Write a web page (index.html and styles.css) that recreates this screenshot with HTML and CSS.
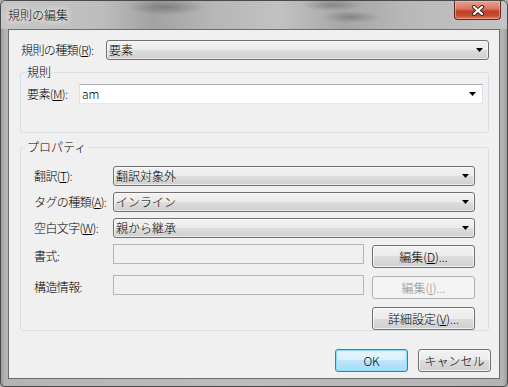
FILE: index.html
```html
<!DOCTYPE html>
<html lang="ja">
<head>
    <meta charset="UTF-8">
    <title>規則の編集</title>
    <link rel="stylesheet" href="styles.css">
</head>
<body>

<div class="window">
    <div class="titlebar">
        <span class="title">規則の編集</span>
        <div class="close">
            <svg width="14" height="11" viewBox="0 0 14 11">
                <path d="M3 2 L11 9 M11 2 L3 9" stroke="#3a2a28" stroke-width="4.2" stroke-linecap="round"/>
                <path d="M3 2 L11 9 M11 2 L3 9" stroke="#ffffff" stroke-width="2.2" stroke-linecap="round"/>
            </svg>
        </div>
    </div>

    <div class="client">
        <div class="row row-top">
            <label class="lbl lbl-kind">規則の種類(<u>R</u>):</label>
            <div class="combo combo-kind">
                <span class="value">要素</span>
                <svg class="arrow" width="7" height="4" viewBox="0 0 7 4"><polygon points="0,0 7,0 3.5,4" fill="#000"/></svg>
            </div>
        </div>

        <div class="group group-rule">
            <div class="group-title">規則</div>
            <div class="row row-elem">
                <label class="lbl lbl-elem">要素(<u>M</u>):</label>
                <div class="combo combo-edit">
                    <span class="value">am</span>
                    <svg class="arrow" width="7" height="4" viewBox="0 0 7 4"><polygon points="0,0 7,0 3.5,4" fill="#000"/></svg>
                </div>
            </div>
        </div>

        <div class="group group-prop">
            <div class="group-title">プロパティ</div>
            <div class="prop-rows">
                <div class="row">
                    <label class="lbl lbl-prop">翻訳(<u>T</u>):</label>
                    <div class="combo combo-prop">
                        <span class="value">翻訳対象外</span>
                        <svg class="arrow" width="7" height="4" viewBox="0 0 7 4"><polygon points="0,0 7,0 3.5,4" fill="#000"/></svg>
                    </div>
                </div>
                <div class="row">
                    <label class="lbl lbl-prop">タグの種類(<u>A</u>):</label>
                    <div class="combo combo-prop">
                        <span class="value">インライン</span>
                        <svg class="arrow" width="7" height="4" viewBox="0 0 7 4"><polygon points="0,0 7,0 3.5,4" fill="#000"/></svg>
                    </div>
                </div>
                <div class="row">
                    <label class="lbl lbl-prop">空白文字(<u>W</u>):</label>
                    <div class="combo combo-prop">
                        <span class="value">親から継承</span>
                        <svg class="arrow" width="7" height="4" viewBox="0 0 7 4"><polygon points="0,0 7,0 3.5,4" fill="#000"/></svg>
                    </div>
                </div>
                <div class="row row-field">
                    <label class="lbl lbl-prop">書式:</label>
                    <div class="textbox"></div>
                    <button class="btn btn-side">編集(<u>D</u>)...</button>
                </div>
                <div class="row row-field">
                    <label class="lbl lbl-prop">構造情報:</label>
                    <div class="textbox"></div>
                    <button class="btn btn-side" disabled>編集(<u>I</u>)...</button>
                </div>
                <div class="row row-field row-detail">
                    <button class="btn btn-side">詳細設定(<u>V</u>)...</button>
                </div>
            </div>
        </div>

        <div class="actions">
            <button class="btn btn-ok">OK</button>
            <button class="btn btn-cancel">キャンセル</button>
        </div>
    </div>
</div>

</body>
</html>
```

FILE: styles.css
```css
body {
    margin: 0;
    font-family: "Noto Sans CJK JP", "Liberation Sans", sans-serif;
    font-size: 12px;
    font-weight: 300;
    line-height: 14px;
    color: #000;
    background-color: #a8a8a8;
}

.window {
    width: 508px;
    height: 387px;
    box-sizing: border-box;
    border: 1px solid #4a4a4a;
    border-radius: 6px 6px 5px 5px;
    overflow: hidden;
    background: linear-gradient(90deg, #9c9c9c 0, #b4b4b4 4px, #bdbdbd 50%, #b4b4b4 calc(100% - 4px), #9c9c9c 100%);
}

.titlebar {
    height: 28px;
    display: flex;
    align-items: center;
    padding-left: 7px;
    background:
        radial-gradient(ellipse 40px 8px at 165px 6px, rgba(80, 80, 80, 0.45), transparent),
        radial-gradient(ellipse 30px 6px at 330px 4px, rgba(80, 80, 80, 0.4), transparent),
        radial-gradient(ellipse 30px 6px at 350px 16px, rgba(80, 80, 80, 0.4), transparent),
        linear-gradient(90deg, #c6c6c6 0, #bdbdbd 20%, #a2a2a2 30%, #b6b6b6 42%, #c2c2c2 55%, #a6a6a6 68%, #b8b8b8 80%, #c4c4c4 100%);
}

.title {
    font-size: 12px;
    color: #111;
    text-shadow: 0 0 6px #fff, 0 0 10px #fff;
}

.close {
    margin-left: auto;
    margin-right: 6px;
    align-self: flex-start;
    width: 47px;
    height: 19px;
    box-sizing: border-box;
    border: 1px solid #5b2c24;
    border-top: none;
    border-radius: 0 0 4px 4px;
    background: linear-gradient(#e6a294 0, #d9735f 45%, #c2412a 55%, #c44a30 80%, #e07a5c 100%);
    box-shadow: inset 0 0 0 1px rgba(255, 200, 190, 0.5);
    display: flex;
    align-items: center;
    justify-content: center;
}

.client {
    height: 350px;
    margin: 0 7px;
    box-sizing: border-box;
    border: 1px solid #6c6c6c;
    background-color: #f0f0f0;
    padding: 10px 10px 0 11px;
}

.row {
    display: flex;
    align-items: center;
    height: 20px;
}

.lbl {
    flex-shrink: 0;
    white-space: nowrap;
    letter-spacing: -0.6px;
}

.lbl-kind {
    width: 86px;
    padding-left: 1px;
    box-sizing: border-box;
}

.combo {
    height: 20px;
    box-sizing: border-box;
    display: flex;
    align-items: center;
    padding: 0 5px 0 2px;
    border: 1px solid #707070;
    border-radius: 3px;
    background: linear-gradient(#f2f2f2 0, #ebebeb 50%, #dddddd 50%, #cfcfcf 100%);
    box-shadow: inset 0 0 0 1px rgba(255, 255, 255, 0.6);
}

.combo .value {
    flex: 1;
    white-space: nowrap;
}

.combo .arrow {
    flex-shrink: 0;
}

.combo-kind {
    flex: 1;
}

.group {
    border: 1px solid #d5dfe5;
    border-radius: 3px;
    box-sizing: border-box;
}

.group-title {
    display: table;
    margin: -8px 0 0 4px;
    padding: 0 2px;
    background-color: #f0f0f0;
}

.group-rule {
    height: 61px;
    margin-top: 12px;
}

.row-elem {
    margin: 5px 5px 0 6px;
}

.lbl-elem {
    width: 52px;
}

.combo-edit {
    flex: 1;
    border-radius: 0;
    background: #fff;
    box-shadow: none;
    border-color: #abadb3 #dbdfe6 #e3e9ef #e2e3ea;
    padding-right: 6px;
}

.group-prop {
    height: 184px;
    margin-top: 14px;
}

.prop-rows {
    display: flex;
    flex-direction: column;
    gap: 6px;
    margin: 12px 13px 0 13px;
}

.lbl-prop {
    width: 79px;
}

.combo-prop {
    flex: 1;
}

.prop-rows .row-field {
    height: 24px;
    align-items: flex-start;
}

.prop-rows .row-field + .row-field {
    margin-top: 1px;
}

.row-field .lbl {
    align-self: center;
}

.textbox {
    width: 251px;
    height: 20px;
    box-sizing: border-box;
    border: 1px solid #b5b5b5;
    background-color: #f0f0f0;
}

.btn {
    font-family: inherit;
    font-size: 12px;
    font-weight: 300;
    line-height: 14px;
    color: #000;
    height: 23px;
    padding: 0;
    box-sizing: border-box;
    border: 1px solid #707070;
    border-radius: 3px;
    background: linear-gradient(#f2f2f2 0, #ebebeb 50%, #dddddd 50%, #cfcfcf 100%);
    box-shadow: inset 0 0 0 1px rgba(255, 255, 255, 0.7);
}

.btn u {
    text-decoration: underline;
}

.btn:disabled {
    color: #8d8d8d;
    border-color: #adb2b5;
    background: #f4f4f4;
    box-shadow: none;
}

.btn-side {
    width: 103px;
    margin: 1px 0 0 8px;
}

.row-detail {
    justify-content: flex-end;
}

.actions {
    display: flex;
    justify-content: flex-end;
    gap: 10px;
    margin: 18px -2px 0 0;
}

.btn-ok,
.btn-cancel {
    width: 73px;
}

.btn-ok {
    border-color: #3c7fb1;
    background: linear-gradient(#eaf6fd 0, #d9f0fc 50%, #bee6fd 50%, #a7d9f5 100%);
    box-shadow: inset 0 0 0 1px #8fdcf7, inset 0 0 2px 2px rgba(180, 235, 252, 0.6);
}
```
